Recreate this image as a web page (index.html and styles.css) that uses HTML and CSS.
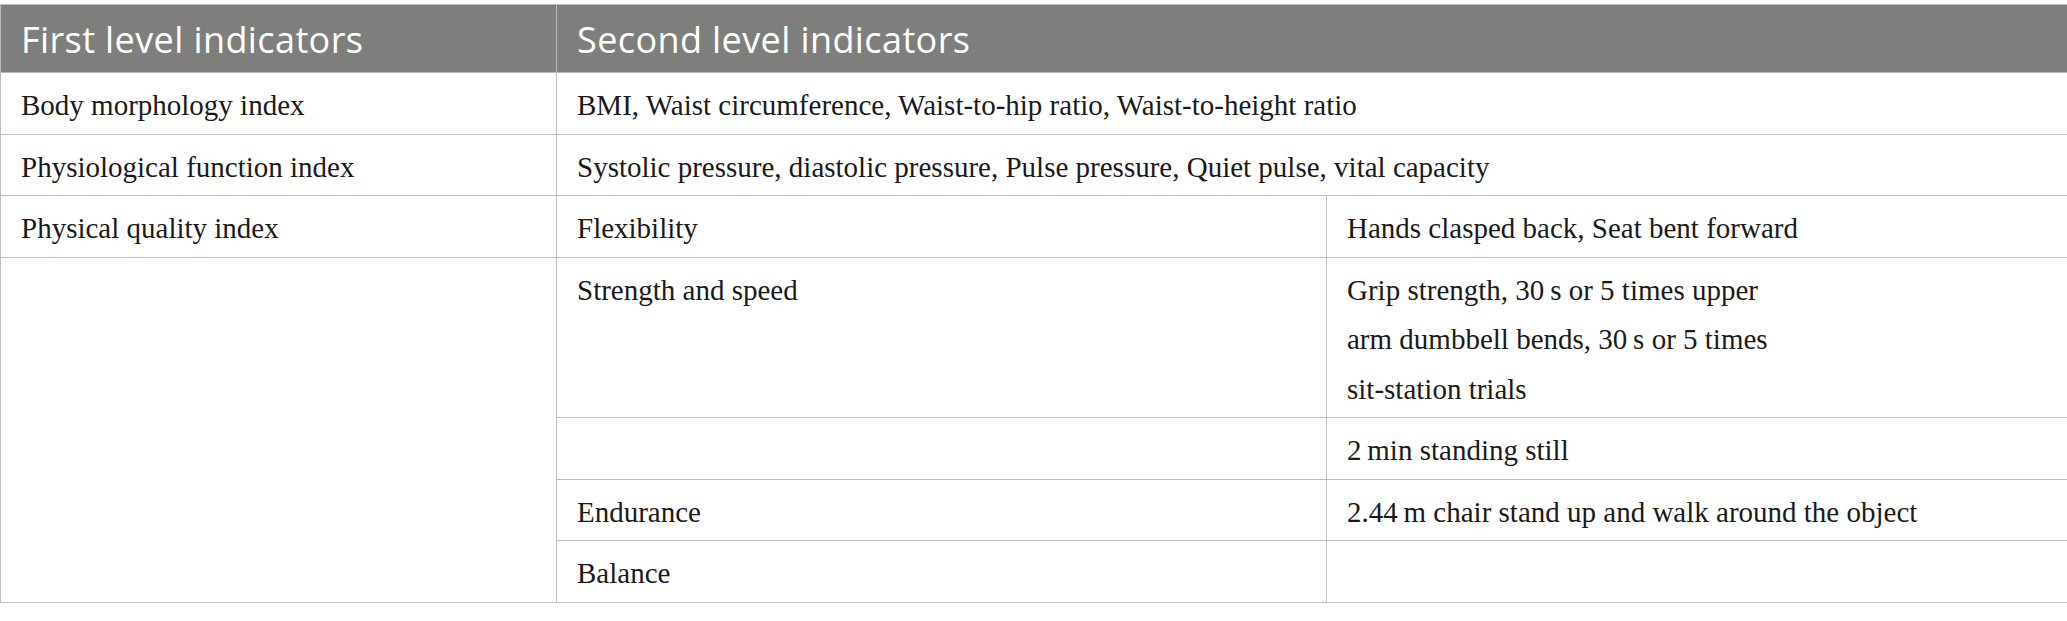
FILE: index.html
```html
<!DOCTYPE html>
<html lang="en">
<head>
<meta charset="utf-8">
<title>Indicators</title>
<link rel="stylesheet" href="styles.css">
</head>
<body>
<table class="ind-table">
  <colgroup>
    <col class="c1">
    <col class="c2">
    <col class="c3">
  </colgroup>
  <thead>
    <tr>
      <th>First level indicators</th>
      <th colspan="2">Second level indicators</th>
    </tr>
  </thead>
  <tbody>
    <tr>
      <td>Body morphology index</td>
      <td colspan="2">BMI, Waist circumference, Waist-to-hip ratio, Waist-to-height ratio</td>
    </tr>
    <tr>
      <td>Physiological function index</td>
      <td colspan="2">Systolic pressure, diastolic pressure, Pulse pressure, Quiet pulse, vital capacity</td>
    </tr>
    <tr>
      <td>Physical quality index</td>
      <td>Flexibility</td>
      <td>Hands clasped back, Seat bent forward</td>
    </tr>
    <tr>
      <td rowspan="5"></td>
      <td>Strength and speed</td>
      <td>Grip strength, 30&#8201;s or 5 times upper<br>arm dumbbell bends, 30&#8201;s or 5 times<br>sit-station trials</td>
    </tr>
    <tr>
      <td></td>
      <td>2&#8201;min standing still</td>
    </tr>
    <tr>
      <td>Endurance</td>
      <td>2.44&#8201;m chair stand up and walk around the object</td>
    </tr>
    <tr>
      <td>Balance</td>
      <td></td>
    </tr>
  </tbody>
</table>
</body>
</html>
```

FILE: styles.css
```css
html, body {
  margin: 0;
  padding: 0;
  background: #ffffff;
}

body {
  padding-top: 4px;
}

.ind-table {
  border-collapse: collapse;
  table-layout: fixed;
  width: 2067px;
}

.c1 { width: 556px; }
.c2 { width: 770px; }
.c3 { width: 741px; }

.ind-table th {
  background: #7e7f7d;
  color: #ffffff;
  font-family: "Open Sans", "Noto Sans", sans-serif;
  font-weight: 400;
  font-size: 36px;
  letter-spacing: 0.4px;
  line-height: 48px;
  text-align: left;
  padding: 11px 20px 8px 20px;
  border: 1px solid #b9b9b9;
}

.ind-table th + th {
  border-left: 1px solid #a9a9a9;
}

.ind-table td {
  font-family: "Liberation Serif", "Times New Roman", serif;
  font-size: 29px;
  line-height: 49.5px;
  color: #1a1a1a;
  vertical-align: top;
  text-align: left;
  padding: 8px 20px 3px 20px;
  border: 1px solid #bdbdbd;
}
```
